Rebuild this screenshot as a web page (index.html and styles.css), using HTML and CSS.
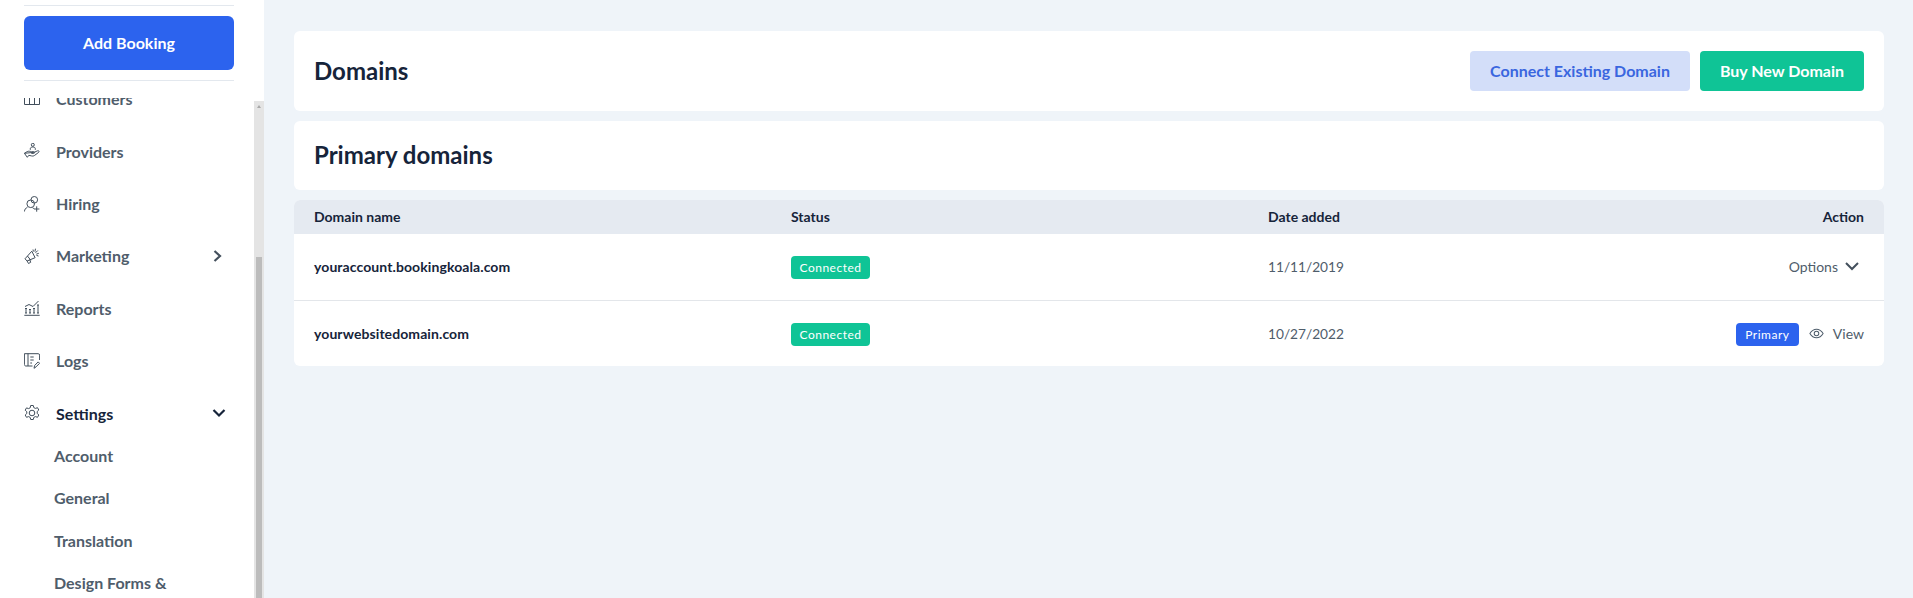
FILE: index.html
```html
<!DOCTYPE html>
<html lang="en">
<head>
<meta charset="utf-8">
<title>Domains</title>
<link rel="stylesheet" href="styles.css">
</head>
<body>
<div class="app">
  <aside class="sidebar">
    <div class="add-wrap"><button class="add-btn">Add Booking</button></div>
    <nav class="nav">
      <a class="nav-item first">
        <svg class="ico" viewBox="0 0 16 16"><path d="M.5 7v6.500h15V7M5.500 5v8.500M10.500 5v8.500M3 3h10"/></svg>
        <span>Customers</span>
      </a>
      <a class="nav-item">
        <svg class="ico" viewBox="0 0 16 16"><circle cx="8.800" cy="1.800" r="1.500"/><path d="M6.300 6.800V5.600c0-1 1-1.600 2.500-1.600s2.500.6 2.500 1.600v1.200M.4 10.300l2.800-1.700c1.400-.7 2.800-.3 4.300.1h2.300c1.100 0 1.100 1.700 0 1.700H7.300M10.200 9.300l3.300-1.500c1.300-.5 2.100.8 1.100 1.600l-4 3c-1 .7-2 .8-3.200.5l-2.600-.6-1.500 2L.4 10.300z"/></svg>
        <span>Providers</span>
      </a>
      <a class="nav-item">
        <svg class="ico" viewBox="0 0 16 16"><circle cx="10.300" cy="3.800" r="3.300"/><circle cx="6.700" cy="7.800" r="3.800"/><path d="M.4 15.500c.2-2 1.300-3.500 3-4.200M8.500 11.700c.8.300 1.300.8 1.700 1.300M12.700 10.300v5.400M10 13h5.400"/></svg>
        <span>Hiring</span>
      </a>
      <a class="nav-item">
        <svg class="ico" viewBox="0 0 16 16"><path d="M1 10.800l6.800-7.600 3.300 6.500-8 3.300zM3 12.800l1.500 2.700 2.200-1.200-1-2.800M3.400 8l3.400 4.200M9 1.500l.4 2M11.500.7l-.6 3M13.800 2.500l-2.300 2.300M14.800 5.300l-2.500.9M14.500 8l-2-.6"/></svg>
        <span>Marketing</span>
        <svg class="chev" viewBox="0 0 12 12"><path d="M2.500 1L8 6l-5.500 5"/></svg>
      </a>
      <a class="nav-item">
        <svg class="ico" viewBox="0 0 16 16"><path d="M.3 15.300h15.400M2 13V8.500M1 8.500h2M1 13h2M6 13V9.500M5 9.500h2M5 13h2M10 13V8.500M9 8.500h2M9 13h2M14 13V5M13 5h2M13 13h2M1 6.500l4-2 4 2L14.500 1"/></svg>
        <span>Reports</span>
      </a>
      <a class="nav-item">
        <svg class="ico" viewBox="0 0 16 16"><path d="M8.500 13H2c-1 0-1.600-.6-1.600-1.500V.7h13.800c.9 0 1.400.5 1.400 1.400V7M4 .7V13M6.300 4h3.400M6.300 7h3.400M6.300 10h1.700M10 15.300l.6-2.800 3.600-3.600 1.400 1.400-3.600 3.600z"/></svg>
        <span>Logs</span>
      </a>
      <a class="nav-item active">
        <svg class="ico" viewBox="0 0 16 16"><circle cx="8" cy="8" r="2.800"/><path d="M6.700.5h2.600l.5 2.100 1.600.8 2.100-.7 1.300 2.300-1.600 1.500v1.800L14.800 10l-1.300 2.300-2.100-.7-1.600.8-.5 2.100H6.700l-.5-2.100-1.600-.8-2.100.7L1.200 10l1.600-1.500V6.700L1.200 5.200l1.300-2.300 2.100.7 1.600-.8z"/></svg>
        <span>Settings</span>
        <svg class="chev wide" viewBox="0 0 14 12"><path d="M1.500 3L7 8.500 12.500 3"/></svg>
      </a>
      <div class="subs">
        <a class="sub-item">Account</a>
        <a class="sub-item">General</a>
        <a class="sub-item">Translation</a>
        <a class="sub-item">Design Forms &amp;</a>
      </div>
    </nav>
    <div class="scrollbar"><i class="arrow"></i><div class="thumb"></div></div>
  </aside>
  <main class="main">
    <section class="card head-card">
      <h1>Domains</h1>
      <div class="actions">
        <button class="btn btn-light">Connect Existing Domain</button>
        <button class="btn btn-green">Buy New Domain</button>
      </div>
    </section>
    <section class="card title-card"><h2>Primary domains</h2></section>
    <section class="table">
      <div class="row thead">
        <div>Domain name</div><div>Status</div><div>Date added</div><div class="right">Action</div>
      </div>
      <div class="row tr">
        <div class="name">youraccount.bookingkoala.com</div>
        <div class="cell-badge"><span class="badge green">Connected</span></div>
        <div class="date">11/11/2019</div>
        <div class="right act">Options
          <svg class="opt-chev" viewBox="0 0 14 9"><path d="M1 1L7 7l6-6"/></svg>
        </div>
      </div>
      <div class="row tr last">
        <div class="name">yourwebsitedomain.com</div>
        <div class="cell-badge"><span class="badge green">Connected</span></div>
        <div class="date">10/27/2022</div>
        <div class="right act">
          <span class="badge blue">Primary</span>
          <svg class="eye" viewBox="0 0 16 12"><path d="M.8 6C2.600 3 4.900 1.300 8 1.300S13.400 3 15.200 6c-1.800 3-4.100 4.700-7.200 4.700S2.600 9 .8 6z"/><circle cx="8" cy="6" r="2.500"/></svg>
          <span class="view">View</span>
        </div>
      </div>
    </section>
  </main>
</div>
</body>
</html>
```
FILE: styles.css
```css
* { box-sizing: border-box; }
html, body { margin: 0; height: 100%; overflow: hidden; }
body { font-family: Lato, sans-serif; background: #eff4f9; color: #16243a; }
.app { display: flex; height: 598px; }
.sidebar { position: relative; width: 264px; flex: none; background: #fff; padding: 5px 30px 0 24px; display: flex; flex-direction: column; overflow: hidden; }
.add-wrap { border-top: 1px solid #e3e8ee; border-bottom: 1px solid #e3e8ee; padding: 10px 0; flex: none; height: 76px; }
.add-btn { display: block; width: 100%; height: 54px; border: 0; border-radius: 6px; background: #2c63ee; color: #fff; font: 700 16px Lato, sans-serif; padding: 0 0 2px; }
.nav { margin-top: 17px; flex: 1; overflow: hidden; display: flex; flex-direction: column; }
.nav-item { display: flex; align-items: center; flex: none; height: 52.400px; color: #4f5d6b; font-size: 16px; font-weight: 700; }
.nav-item.first { margin-top: -25.400px; }
.nav-item.active { color: #16243a; }
.ico { width: 16px; height: 16px; flex: none; margin-right: 16px; fill: none; stroke: #414e5b; stroke-width: 1; }
.chev { width: 12px; height: 12px; margin-left: auto; margin-right: 10px; fill: none; stroke: #44505d; stroke-width: 2.200; }
.chev.wide { width: 14px; margin-right: 8.500px; stroke: #16243a; stroke-width: 2.200; }
.subs { margin-top: -5.500px; }
.sub-item { display: flex; align-items: center; height: 42.500px; padding-left: 30px; color: #4f5d6b; font-size: 16px; font-weight: 700; white-space: nowrap; }
.scrollbar { position: absolute; right: 0; top: 101px; bottom: 0; width: 10px; background: #e4e4e4; }
.arrow { position: absolute; left: 3px; top: 4px; border: 2px solid transparent; border-top: 0; border-bottom: 3px solid #a8a8a8; }
.thumb { position: absolute; left: 2px; right: 2px; top: 156px; bottom: 0; background: #bcbcbc; }
.main { flex: 1; padding: 31px 29px 0 30px; min-width: 0; }
.card { background: #fff; border-radius: 6px; }
.head-card { height: 80px; padding: 0 20px 2px; display: flex; align-items: center; justify-content: space-between; margin-bottom: 10px; }
.title-card { height: 69px; padding: 0 20px 2px; display: flex; align-items: center; margin-bottom: 10px; }
h1, h2 { margin: 0; font-size: 24px; font-weight: 700; color: #16243a; }
.actions { display: flex; gap: 10px; margin-top: 2px; }
.btn { height: 40px; border: 0; border-radius: 4px; font: 700 16px Lato, sans-serif; padding: 0 0 2px; white-space: nowrap; }
.btn-light { width: 220px; background: #d3def9; color: #3a66df; }
.btn-green { width: 164px; background: #0fc496; color: #fff; }
.table { background: #fff; border-radius: 6px; overflow: hidden; }
.row { display: grid; grid-template-columns: 477px 477px 1fr 300px; align-items: center; padding: 0 20px; }
.thead { height: 34px; padding-bottom: 2px; background: #e5eaf1; font-size: 14px; font-weight: 700; color: #16243a; }
.tr { height: 67px; padding-bottom: 1px; border-bottom: 1px solid #e3e6ea; font-size: 14px; }
.tr.last { height: 65px; padding-bottom: 0; border-bottom: 0; }
.name { font-weight: 700; color: #16243a; letter-spacing: .09px; }
.date { font-size: 13.700px; color: #4f5d6b; }
.right { display: flex; justify-content: flex-end; align-items: center; }
.act { font-size: 14px; color: #4f5d6b; }
.cell-badge { display: flex; padding-top: 2px; }
.badge { display: inline-flex; align-items: center; justify-content: center; height: 23px; border-radius: 4px; color: #fff; font-size: 12px; font-weight: 400; letter-spacing: .5px; }
.badge.green { width: 79px; background: #0fc496; }
.badge.blue { width: 63px; background: #2c63ee; margin-right: 10px; margin-top: 2px; }
.opt-chev { width: 14px; height: 9px; margin-left: 7px; margin-right: 5px; fill: none; stroke: #44505d; stroke-width: 2; }
.eye { width: 15px; height: 11px; margin-right: 9px; fill: none; stroke: #4f5d6b; stroke-width: 1.100; }
.view { color: #4f5d6b; }
```
